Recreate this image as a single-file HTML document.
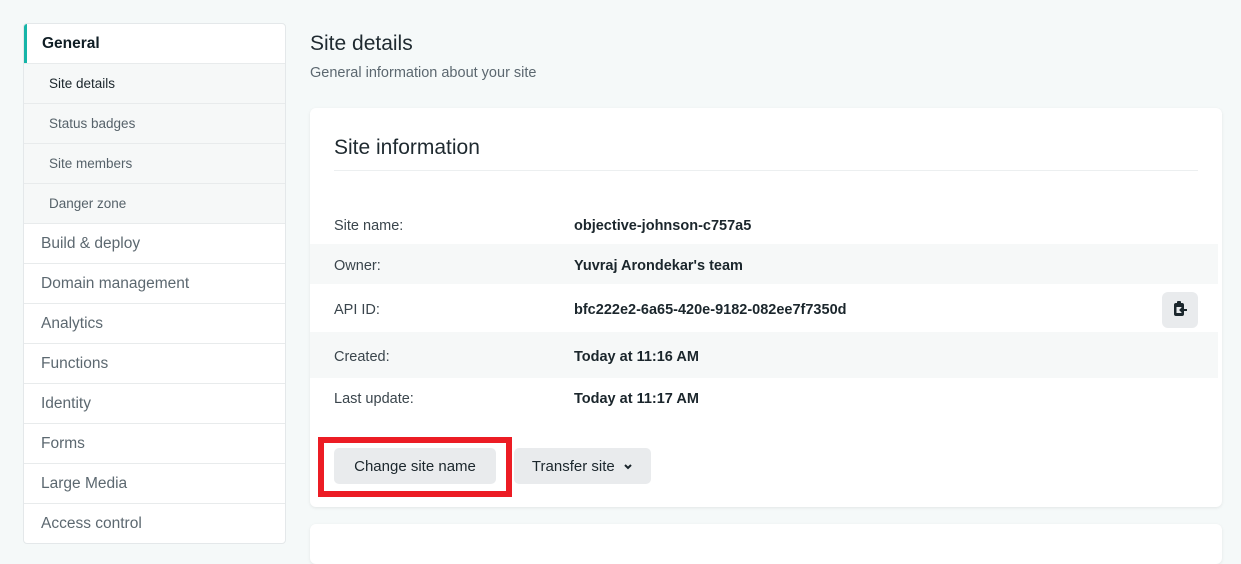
<!DOCTYPE html>
<html><head><style>
*{box-sizing:border-box;margin:0;padding:0}
body{width:1241px;height:546px;background:#f5f9f9;font-family:"Liberation Sans",sans-serif;position:relative;overflow:hidden;color:#1f2a30}
.side{position:absolute;left:23px;top:23px;width:263px;background:#fff;border:1px solid #e4e8ea;border-radius:4px;overflow:hidden}
.side div{height:40px;border-top:1px solid #e8ebec;line-height:40px;padding-left:17px;font-size:15.5px;color:#5c6870}
.side div:first-child{height:39px;border-top:none;color:#0f1d24;font-weight:bold;border-left:3px solid #16b5a8;padding-left:15px}
.side .sub{background:#f6f8f8;padding-left:25px;font-size:13.5px;color:#56626a}
.side .sub.a{color:#1b262c}
h1{position:absolute;left:310px;top:32px;font-size:21px;font-weight:normal;color:#1f2a30}
.desc{position:absolute;left:310px;top:65px;font-size:14.5px;color:#5c6870}
.card{position:absolute;left:310px;top:108px;width:912px;height:399px;background:#fff;border-radius:6px;box-shadow:0 1px 3px rgba(0,0,0,.08)}
.card2{position:absolute;left:310px;top:524px;width:912px;height:40px;background:#fff;border-radius:6px;box-shadow:0 1px 3px rgba(0,0,0,.08)}
.ct{position:absolute;left:24px;top:28px;font-size:21px;color:#1f2a30}
.hr{position:absolute;left:24px;right:24px;top:62px;border-top:1px solid #eceff0}
.row{position:absolute;left:0;width:908px;font-size:14.5px}
.row span{position:absolute;left:24px;top:2px;color:#3a454c}
.row b{position:absolute;left:264px;top:2px;color:#1b262c}
.sh{background:#f6f8f8}
.btn{position:absolute;top:340px;height:36px;background:#e9ebed;border-radius:5px;font-size:15px;line-height:38px;text-align:center;color:#1b262c}
.red{position:absolute;left:318px;top:437px;width:194px;height:60px;border:6px solid #ec1c24}
.copy{position:absolute;left:852px;top:184px;width:36px;height:36px;background:#e9ebed;border-radius:6px}
</style></head><body>
<div class="side">
<div>General</div>
<div class="sub a">Site details</div>
<div class="sub">Status badges</div>
<div class="sub">Site members</div>
<div class="sub">Danger zone</div>
<div>Build &amp; deploy</div>
<div>Domain management</div>
<div>Analytics</div>
<div>Functions</div>
<div>Identity</div>
<div>Forms</div>
<div>Large Media</div>
<div>Access control</div>
</div>
<h1>Site details</h1>
<div class="desc">General information about your site</div>
<div class="card">
<div class="ct">Site information</div>
<div class="hr"></div>
<div class="row" style="top:96px;height:40px;line-height:40px"><span>Site name:</span><b>objective-johnson-c757a5</b></div>
<div class="row sh" style="top:136px;height:40px;line-height:40px"><span>Owner:</span><b>Yuvraj Arondekar's team</b></div>
<div class="row" style="top:176px;height:48px;line-height:48px"><span>API ID:</span><b style="font-weight:bold">bfc222e2-6a65-420e-9182-082ee7f7350d</b></div>
<div class="row sh" style="top:224px;height:46px;line-height:46px"><span>Created:</span><b>Today at 11:16 AM</b></div>
<div class="row" style="top:270px;height:38px;line-height:38px"><span>Last update:</span><b>Today at 11:17 AM</b></div>
<div class="copy"><svg width="36" height="36" viewBox="0 0 36 36"><rect x="12" y="11" width="10" height="13" rx="2" fill="#1b262c"/><rect x="15" y="9" width="4" height="3" rx="1" fill="#1b262c"/><rect x="14.5" y="15" width="5" height="6" fill="#e9ebed"/><path d="M25 18h-6M21 15.5l-2.5 2.5 2.5 2.5" stroke="#1b262c" stroke-width="2" fill="none"/></svg></div>
<div class="btn" style="left:24px;width:162px">Change site name</div>
<div class="btn" style="left:204px;width:137px">Transfer site &nbsp;<svg width="10" height="8" viewBox="0 0 10 8"><path d="M2 2l3 3 3-3" stroke="#1b262c" stroke-width="2" fill="none"/></svg></div>
</div>
<div class="red"></div>
<div class="card2"></div>
</body></html>
